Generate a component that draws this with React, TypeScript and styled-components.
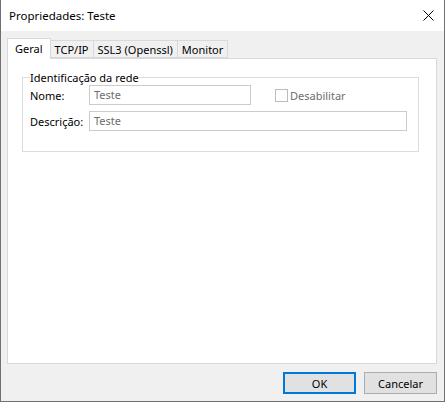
import styled, { createGlobalStyle } from 'styled-components'

const GlobalStyle = createGlobalStyle`
    html, body {
        margin: 0;
        padding: 0;
        background: #ffffff;
    }
    body {
        font-family: "Noto Sans", "Open Sans", "Liberation Sans", sans-serif;
        font-size: 11px;
        color: #000000;
    }
`

const Window = styled.div`
    box-sizing: border-box;
    width: 445px;
    height: 402px;
    display: flex;
    flex-direction: column;
    border: 1px solid #707070;
    border-top: none;
    background: #f0f0f0;
`

const TitleBar = styled.div`
    height: 31px;
    flex: none;
    display: flex;
    align-items: center;
    justify-content: space-between;
    padding: 0 10px 0 8px;
    background: #ffffff;
`

const Title = styled.span`
    font-size: 11.5px;
    line-height: 16px;
    margin-top: 1px;
`

const CloseButton = styled.button`
    width: 12px;
    height: 12px;
    padding: 0;
    border: none;
    background: transparent;
    display: flex;
    align-items: center;
    justify-content: center;
`

const Body = styled.div`
    flex: 1;
    display: flex;
    flex-direction: column;
    padding: 7px 7px 0 6px;
`

const TabStrip = styled.div`
    display: flex;
    align-items: flex-end;
    height: 20px;
    position: relative;
    z-index: 1;
`

const Tab = styled.div<{ $active?: boolean }>`
    box-sizing: border-box;
    height: ${p => (p.$active ? '21px' : '18px')};
    margin-bottom: ${p => (p.$active ? '-1px' : '0')};
    padding: ${p => (p.$active ? '0 7px' : '0 4px')};
    margin-left: ${p => (p.$active ? '0' : '-1px')};
    display: flex;
    align-items: ${p => (p.$active ? 'flex-start' : 'center')};
    padding-top: ${p => (p.$active ? '2px' : '0')};
    border: 1px solid #d9d9d9;
    border-bottom: ${p => (p.$active ? 'none' : '1px solid #d9d9d9')};
    background: ${p => (p.$active ? '#ffffff' : '#f0f0f0')};
    line-height: 15px;
    white-space: nowrap;
    &:first-child {
        margin-left: 0;
    }
`

const Panel = styled.div`
    box-sizing: border-box;
    height: 306px;
    flex: none;
    background: #ffffff;
    border: 1px solid #d9d9d9;
    padding: 11px 17px 0 14px;
`

const GroupBox = styled.fieldset`
    margin: 0;
    padding: 0 11px 20px 7px;
    border: 1px solid #dcdcdc;
`

const Legend = styled.legend`
    padding: 0;
    margin-left: 0;
    line-height: 15px;
`

const Row = styled.div`
    display: flex;
    align-items: center;
    height: 20px;
    & + & {
        margin-top: 6px;
    }
`

const Label = styled.label`
    width: 59px;
    flex: none;
`

const TextInput = styled.div<{ $width?: number }>`
    box-sizing: border-box;
    height: 20px;
    width: ${p => (p.$width ? `${p.$width}px` : 'auto')};
    flex: ${p => (p.$width ? 'none' : '1')};
    border: 1px solid #cccccc;
    background: #ffffff;
    color: #6d6d6d;
    padding-left: 4px;
    line-height: 18px;
`

const CheckRow = styled.div`
    display: flex;
    align-items: center;
    margin-left: 24px;
    color: #6d6d6d;
    gap: 2px;
`

const CheckBox = styled.span`
    box-sizing: border-box;
    width: 13px;
    height: 13px;
    border: 1px solid #bcbcbc;
    background: #ffffff;
`

const Footer = styled.div`
    flex: 1;
    display: flex;
    justify-content: flex-end;
    align-items: flex-start;
    gap: 8px;
    padding-top: 8px;
`

const Button = styled.button<{ $default?: boolean }>`
    box-sizing: border-box;
    width: 73px;
    height: 22px;
    font-family: inherit;
    font-size: 11px;
    color: #000000;
    background: #e1e1e1;
    border: ${p => (p.$default ? '2px solid #0078d7' : '1px solid #adadad')};
    padding: 0;
`

const App = () => {
    return (
        <>
            <GlobalStyle />
            <Window>
                <TitleBar>
                    <Title>Propriedades: Teste</Title>
                    <CloseButton>
                        <svg width='11' height='11' viewBox='0 0 11 11'>
                            <path d='M0.5 0.5 L10.5 10.5 M10.5 0.5 L0.5 10.5' stroke='#000' strokeWidth='1' />
                        </svg>
                    </CloseButton>
                </TitleBar>
                <Body>
                    <TabStrip>
                        <Tab $active>Geral</Tab>
                        <Tab>TCP/IP</Tab>
                        <Tab>SSL3 (Openssl)</Tab>
                        <Tab>Monitor</Tab>
                    </TabStrip>
                    <Panel>
                        <GroupBox>
                            <Legend>Identificação da rede</Legend>
                            <Row>
                                <Label>Nome:</Label>
                                <TextInput $width={162}>Teste</TextInput>
                                <CheckRow>
                                    <CheckBox />
                                    <span>Desabilitar</span>
                                </CheckRow>
                            </Row>
                            <Row>
                                <Label>Descrição:</Label>
                                <TextInput>Teste</TextInput>
                            </Row>
                        </GroupBox>
                    </Panel>
                    <Footer>
                        <Button $default>OK</Button>
                        <Button>Cancelar</Button>
                    </Footer>
                </Body>
            </Window>
        </>
    )
}

export default App
